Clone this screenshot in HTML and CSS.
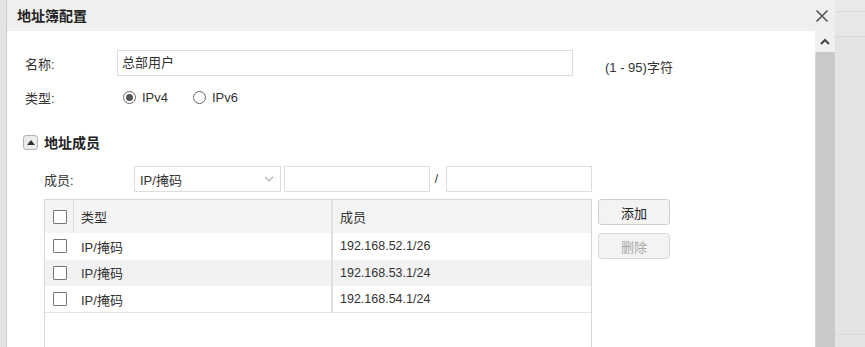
FILE: index.html
```html
<!DOCTYPE html>
<html lang="zh-CN">
<head>
    <meta charset="UTF-8">
    <meta name="viewport" content="width=device-width, initial-scale=1.0">
    <link rel="stylesheet" href="styles.css">
    <title>地址簿配置</title>
</head>
<body>
    <div class="page">
        <div class="left-strip"></div>

        <div class="dialog">
            <div class="titlebar">
                <span class="title">地址簿配置</span>
                <svg class="close" width="14" height="14" viewBox="0 0 14 14">
                    <path d="M1.5 1.5 L12.5 12.5 M12.5 1.5 L1.5 12.5" stroke="#555" stroke-width="1.6" fill="none"/>
                </svg>
            </div>

            <div class="body">
                <div class="content">
                    <div class="form-row name-row">
                        <span class="label">名称:</span>
                        <div class="textbox wide">总部用户</div>
                        <span class="hint">(1 - 95)字符</span>
                    </div>
                    <div class="form-row type-row">
                        <span class="label">类型:</span>
                        <span class="radio checked"></span><span class="radio-text">IPv4</span>
                        <span class="radio"></span><span class="radio-text">IPv6</span>
                    </div>

                    <div class="section-head">
                        <span class="toggle">
                            <svg width="8" height="5" viewBox="0 0 8 5"><path d="M0 5 L4 0 L8 5 Z" fill="#333"/></svg>
                        </span>
                        <span class="section-title">地址成员</span>
                    </div>

                    <div class="member-row">
                        <span class="member-label">成员:</span>
                        <div class="select">
                            <span>IP/掩码</span>
                            <svg width="10" height="6" viewBox="0 0 10 6"><path d="M1 1 L5 5 L9 1" stroke="#aaa" stroke-width="1.1" fill="none"/></svg>
                        </div>
                        <div class="textbox small"></div>
                        <span class="slash">/</span>
                        <div class="textbox small"></div>
                    </div>

                    <div class="table-area">
                        <div class="grid">
                            <div class="grid-head">
                                <div class="cell check-col"><span class="checkbox"></span></div>
                                <div class="cell type-col">类型</div>
                                <div class="cell member-col">成员</div>
                            </div>
                            <div class="grid-row">
                                <div class="cell check-col"><span class="checkbox"></span></div>
                                <div class="cell type-col">IP/掩码</div>
                                <div class="cell member-col">192.168.52.1/26</div>
                            </div>
                            <div class="grid-row alt">
                                <div class="cell check-col"><span class="checkbox"></span></div>
                                <div class="cell type-col">IP/掩码</div>
                                <div class="cell member-col">192.168.53.1/24</div>
                            </div>
                            <div class="grid-row last">
                                <div class="cell check-col"><span class="checkbox"></span></div>
                                <div class="cell type-col">IP/掩码</div>
                                <div class="cell member-col">192.168.54.1/24</div>
                            </div>
                        </div>
                        <div class="side-buttons">
                            <button class="btn">添加</button>
                            <button class="btn disabled">删除</button>
                        </div>
                    </div>
                </div>

                <div class="scrollbar">
                    <div class="scroll-up">
                        <svg width="10" height="7" viewBox="0 0 10 7"><path d="M1 6 L5 2 L9 6" stroke="#444" stroke-width="2" fill="none"/></svg>
                    </div>
                    <div class="scroll-thumb"></div>
                </div>
            </div>
        </div>

        <div class="right-strip">
            <div class="band b1"></div>
            <div class="band b2"></div>
            <div class="band b3"></div>
            <div class="band b4"></div>
        </div>
    </div>
</body>
</html>
```

FILE: styles.css
```css
*{
    margin:0px;
    padding:0px;
    box-sizing: border-box;
}
body{
    font-family: "Liberation Sans", "Noto Sans CJK SC", sans-serif;
    font-size: 13px;
    color: #333;
    background-color: #e6e6e6;
    overflow: hidden;
}
.page{
    display: flex;
    height: 347px;
    width: 865px;
}
.left-strip{
    width: 7px;
    background-color: #e4e4e4;
    border-right: 1px solid #cdcdcd;
}
.dialog{
    width: 828px;
    display: flex;
    flex-direction: column;
    background-color: #fff;
}
.titlebar{
    height: 31px;
    background-color: #efefef;
    display: flex;
    align-items: center;
    justify-content: space-between;
    padding: 0 6px 2px 10px;
}
.title{
    font-size: 14px;
    font-weight: bold;
    color: #222;
}
.close{
    margin-top: 2px;
}
.body{
    flex: 1;
    display: flex;
    overflow: hidden;
}
.content{
    flex: 1;
    padding: 19px 0 0 18px;
}
.form-row{
    display: flex;
    align-items: center;
}
.label{
    width: 92px;
    color: #333;
}
.textbox{
    height: 26px;
    border: 1px solid #dcdcdc;
    background-color: #fff;
    padding: 4px 4px;
    line-height: 16px;
}
.textbox.wide{
    width: 456px;
}
.hint{
    margin-left: 32px;
    margin-top: 6px;
}
.type-row{
    margin-top: 9px;
    height: 24px;
}
.radio{
    width: 13px;
    height: 13px;
    border: 1px solid #666;
    border-radius: 50%;
    margin-left: 6px;
    display: inline-flex;
    align-items: center;
    justify-content: center;
}
.radio.checked::after{
    content: "";
    width: 7px;
    height: 7px;
    border-radius: 50%;
    background-color: #555;
}
.radio-text{
    margin-left: 6px;
    width: 45px;
}
.section-head{
    display: flex;
    align-items: center;
    margin-top: 23px;
    margin-left: -2px;
}
.toggle{
    width: 15px;
    height: 15px;
    border: 1px solid #b5b5b5;
    border-radius: 3px;
    background-color: #ececec;
    display: flex;
    align-items: center;
    justify-content: center;
}
.section-title{
    font-weight: bold;
    font-size: 14px;
    margin-left: 6px;
    color: #222;
}
.member-row{
    display: flex;
    align-items: center;
    margin-top: 14px;
    margin-left: 19px;
}
.member-label{
    width: 90px;
}
.select{
    width: 147px;
    height: 26px;
    border: 1px solid #dedede;
    display: flex;
    align-items: center;
    justify-content: space-between;
    padding: 0 6px 0 5px;
}
.textbox.small{
    width: 146px;
    height: 26px;
    margin-left: 3px;
    border-color: #dedede;
}
.slash{
    width: 13px;
    text-align: center;
    font-size: 12px;
}
.table-area{
    display: flex;
    margin-top: 7px;
    margin-left: 19px;
}
.grid{
    width: 548px;
    height: 160px;
    border: 1px solid #d8d8d8;
}
.grid-head{
    display: flex;
    height: 33px;
    background-color: #f4f4f4;
}
.grid-row{
    display: flex;
    height: 26.5px;
    background-color: #fff;
}
.grid-row.alt{
    background-color: #f2f2f2;
}
.grid-row.last{
    border-bottom: 1px solid #e4e4e4;
    height: 27px;
}
.cell{
    display: flex;
    align-items: center;
}
.check-col{
    width: 29px;
    justify-content: center;
    padding-left: 1px;
}
.grid-head .check-col{
    border-right: 1px solid #dcdcdc;
}
.type-col{
    width: 259px;
    padding-left: 7px;
    border-right: 2px solid #e0e0e0;
}
.member-col{
    flex: 1;
    padding-left: 7px;
    font-size: 12.5px;
}
.grid-head .member-col{
    font-size: 13px;
}
.checkbox{
    width: 14px;
    height: 14px;
    border: 1px solid #777;
    border-radius: 1px;
    background-color: #fff;
}
.side-buttons{
    display: flex;
    flex-direction: column;
    gap: 8px;
    margin-left: 6px;
}
.btn{
    width: 72px;
    height: 26px;
    font-family: "Liberation Sans", "Noto Sans CJK SC", sans-serif;
    font-size: 13px;
    color: #222;
    background-color: #f3f3f3;
    border: 1px solid #cfcfcf;
    border-radius: 3px;
}
.btn.disabled{
    color: #a8a8a8;
    border-color: #dadada;
}
.scrollbar{
    width: 20px;
    display: flex;
    flex-direction: column;
    background-color: #f0f0f0;
}
.scroll-up{
    height: 21px;
    display: flex;
    align-items: center;
    justify-content: center;
}
.scroll-thumb{
    flex: 1;
    background-color: #c9c9c9;
    border-left: 1px solid #dadada;
}
.right-strip{
    width: 30px;
    display: flex;
    flex-direction: column;
    background-color: #e4e4e4;
}
.band{
    border-bottom: 1px solid #dadada;
}
.band.b1{
    height: 12px;
    background-color: #e9e9e9;
}
.band.b2{
    height: 25px;
    background-color: #e7e7e7;
}
.band.b3{
    height: 298px;
}
.band.b4{
    flex: 1;
    border-bottom: none;
}
```
